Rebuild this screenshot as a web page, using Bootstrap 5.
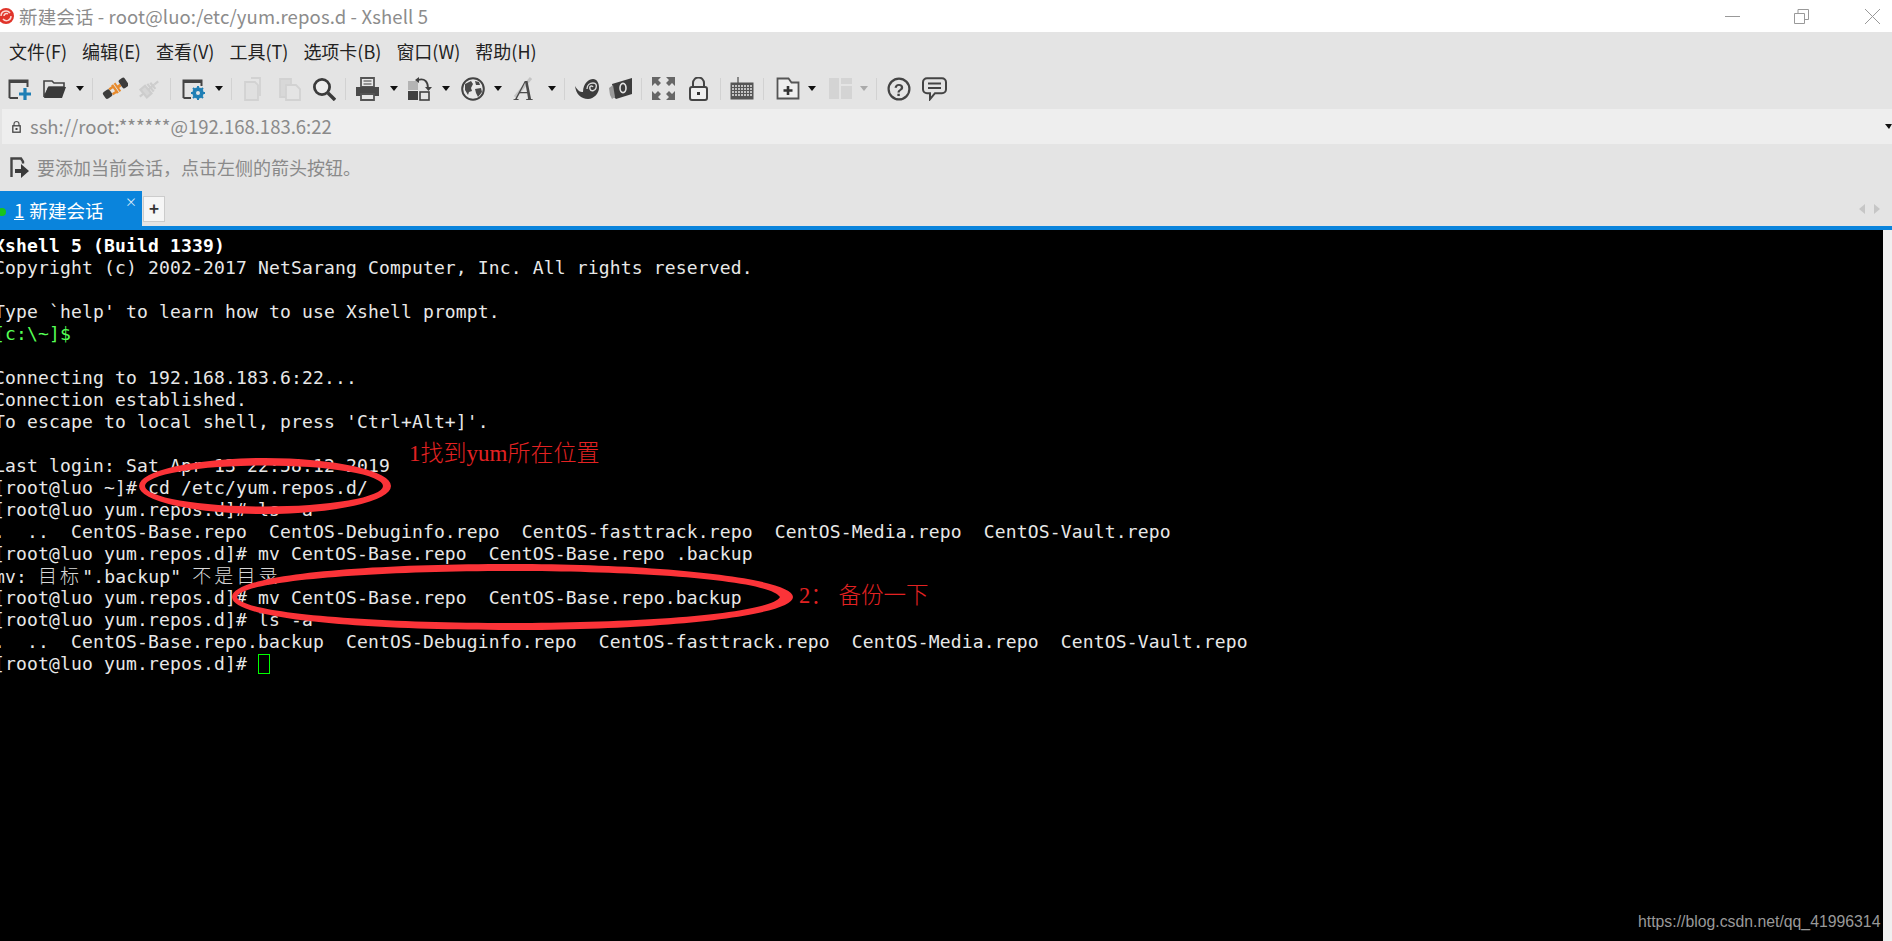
<!DOCTYPE html>
<html lang="zh">
<head>
<meta charset="utf-8">
<title>新建会话 - root@luo:/etc/yum.repos.d - Xshell 5</title>
<link rel="stylesheet" href="https://cdn.jsdelivr.net/npm/bootstrap@5.3.0/dist/css/bootstrap.min.css">
<style>
html,body{height:100%;margin:0;overflow:hidden;background:#000}
.xs-app{height:941px;width:1892px;position:relative;overflow:hidden;font-family:"Noto Sans CJK SC","Noto Sans",sans-serif;background:#e4e4e4}
.xs-title{height:32px;background:#fff;color:#8c8c8c;font-size:18.5px;line-height:32px}
.xs-title .ttl{margin-left:5px;white-space:nowrap;letter-spacing:.13px}
.xs-title .ctl{width:15px;height:15px;display:block}
.ctl-wrap{gap:54px;margin-right:12px}
.ctl-wrap .cl{margin-left:2px}
.xs-menu{height:36px;padding-left:9px;gap:15px;font-size:18px;color:#222;white-space:nowrap;line-height:36px;padding-top:1px}
.xs-tools{height:41px;padding-left:8px}
.xs-tools svg{display:block;filter:blur(.35px);flex:none}
.g8{margin-left:8px}.g9{margin-left:9px}.g10{margin-left:10px}.g11{margin-left:11px}.g12{margin-left:12px}.g13{margin-left:13px}.g14{margin-left:14px}
.tb-caret{width:0;height:0;border-left:4.5px solid transparent;border-right:4.5px solid transparent;border-top:5px solid #111;flex:none}
.tb-caret.off{border-top-color:#aaa}
.tb-sep{width:1px;height:22px;background:#d2d2d2;flex:none}
.xs-addr{height:35px;margin-left:2px;background:#eee;color:#8a8a8a;font-size:18.5px;padding-left:10px;gap:9px;white-space:nowrap}
.xs-addr .dd{margin-left:auto;width:0;height:0;border-left:4px solid transparent;border-right:3px solid transparent;border-top:5px solid #111}
.xs-info{height:47px;padding-left:10px;gap:7px;color:#8a8a8a;font-size:18px;white-space:nowrap}
.xs-tabs{height:35px}
.xs-tab{width:142px;height:35px;background:#0a84dc;color:#fff;font-size:18.6px;padding-left:14px;padding-top:1px;position:relative;white-space:nowrap;line-height:35px}
.xs-tab .dot{position:absolute;left:-2px;top:17px;width:8px;height:8px;border-radius:50%;background:#19c41c}
.xs-tab .x{position:absolute;left:125px;top:-7px;font-size:12px;color:#dcecf8}
.xs-tab u{margin-right:5px}
.xs-add{width:22px;height:26px;margin-top:5px;background:#f6f6f6;border:1px solid #ccc;color:#333;font-size:17px;font-weight:700;line-height:22px;text-align:center;margin-left:1px}
.xs-arrows{margin-left:auto;margin-right:12px;gap:9px}
.ar{width:0;height:0;border-top:5px solid transparent;border-bottom:5px solid transparent}
.ar.l{border-right:6px solid #c6c6c6}.ar.r{border-left:6px solid #c6c6c6}
.xs-strip{height:4px;background:#0a84dc}
.xs-body{height:711px}
.xs-term{background:#000;width:1883px;height:711px;padding-top:5px;color:#e8e8e8;font-family:"DejaVu Sans Mono","Noto Sans CJK SC",monospace;font-size:18px;letter-spacing:.16px;overflow:hidden;position:relative}
.xs-side{width:9px;background:#f0f0f0}
.tl{height:22px;line-height:22px;white-space:pre;margin-left:-6px}
.tl b{color:#fff}
.tl .gr{color:#55ff55}
.tl .wd{font-size:19px;letter-spacing:3.1px;font-weight:300;color:#d8d8d8}
.cur{display:inline-block;width:12px;height:20px;border:1px solid #0f0;vertical-align:-4px}
.ink{position:absolute;left:0;top:0;pointer-events:none}
.note{position:absolute;font-family:"Liberation Serif","Noto Sans CJK SC",serif;color:#e32222;white-space:pre;letter-spacing:0;font-weight:300;line-height:30px}
.n1{left:409px;top:209px;font-size:23px}
.n2{left:799px;top:351px;font-size:22.5px}
.wm{position:absolute;left:1638px;top:682px;font-family:"Liberation Sans",Arial,sans-serif;font-size:15.8px;color:#999;letter-spacing:0;line-height:20px;white-space:nowrap}
</style>
</head>
<body>
<div class="xs-app d-flex flex-column">
  <div class="xs-title d-flex align-items-center">
    <svg width="14" height="18" viewBox="0 0 14 18" class="flex-shrink-0"><circle cx="6" cy="9" r="8" fill="#e0342a"/><path d="M1 9a5 5 0 0 1 9-3M11 9a4.500 4.500 0 0 1-8 3M4 9a2.500 2.500 0 0 1 4-2" fill="none" stroke="#fbd9d4" stroke-width="1.500"/></svg>
    <span class="ttl">新建会话 - root@luo:/etc/yum.repos.d - Xshell 5</span>
    <div class="ms-auto d-flex align-items-center ctl-wrap">
      <svg class="ctl" viewBox="0 0 15 15"><path d="M0 7.500h15" stroke="#999" stroke-width="1"/></svg>
      <svg class="ctl" viewBox="0 0 15 15" fill="none" stroke="#999"><path d="M.5 4.500h10v10H.5z"/><path d="M4 4.500V.5h10.500v10h-4"/></svg>
      <svg class="ctl cl" viewBox="0 0 15 15"><path d="M0 0l15 15M15 0L0 15" stroke="#999" stroke-width="1"/></svg>
    </div>
  </div>

  <div class="xs-menu d-flex align-items-center">
    <span>文件(F)</span><span>编辑(E)</span><span>查看(V)</span><span>工具(T)</span><span>选项卡(B)</span><span>窗口(W)</span><span>帮助(H)</span>
  </div>

  <div class="xs-tools d-flex align-items-center">
    <!-- new -->
    <svg width="24" height="24" viewBox="0 0 24 24"><path d="M1.500 21V3.500h18V10M1.500 21H10" fill="none" stroke="#444" stroke-width="2"/><path d="M1 3h19v3H1z" fill="#444"/><path d="M17 11v12M11 17h12" stroke="#1f7fb5" stroke-width="3.200"/></svg>
    <!-- open -->
    <svg class="g11" width="24" height="24" viewBox="0 0 24 24"><path d="M1 4h8l2 2h10v4H6L1 20z" fill="none" stroke="#444" stroke-width="1.600"/><path d="M5 10h18l-4 11H1z" fill="#3a3a3a"/></svg>
    <div class="tb-caret g9"></div>
    <div class="tb-sep g8"></div>
    <!-- plug orange -->
    <svg class="g9" width="26" height="24" viewBox="0 0 26 24"><g transform="rotate(-35 13 12)"><rect x="0" y="8" width="8" height="8" rx="2" fill="#3c3c3c"/><path d="M8 9h5M8 15h5" stroke="#e78a2c" stroke-width="2.400"/><path d="M13 7v10" stroke="#e78a2c" stroke-width="2.400"/><path d="M16 12h4" stroke="#e78a2c" stroke-width="3"/><rect x="20" y="7" width="7" height="10" rx="2" fill="#3c3c3c"/><path d="M16 7v10" stroke="#e78a2c" stroke-width="2"/></g></svg>
    <!-- plug grey -->
    <svg class="g9" width="24" height="24" viewBox="0 0 24 24"><g transform="rotate(-40 12 12)" fill="none" stroke="#cdcdcd" stroke-width="2.200"><path d="M0 12h5M19 12h5"/><rect x="5" y="7" width="6" height="10" fill="#d6d6d6"/><path d="M14 7v10M17 8v8M11 12h8"/></g></svg>
    <div class="tb-sep g9"></div>
    <!-- props -->
    <svg class="g11" width="24" height="24" viewBox="0 0 24 24"><path d="M1.500 21V3.500h18V9M1.500 21H9" fill="none" stroke="#444" stroke-width="2"/><path d="M1 3h19v3H1z" fill="#444"/><circle cx="16" cy="16" r="4.200" fill="none" stroke="#1f7fb5" stroke-width="3"/><path d="M16 9v14M9 16h14M11 11l10 10M21 11L11 21" stroke="#1f7fb5" stroke-width="2"/><circle cx="16" cy="16" r="2" fill="#e4e4e4"/></svg>
    <div class="tb-caret g9"></div>
    <div class="tb-sep g8"></div>
    <!-- copy -->
    <svg class="g11" width="24" height="24" viewBox="0 0 24 24" fill="none" stroke="#d2d2d2" stroke-width="1.800"><path d="M8 1h9v18"/><path d="M2 5h10l3 3v15H2z" fill="#e0e0e0"/></svg>
    <!-- paste -->
    <svg class="g11" width="24" height="24" viewBox="0 0 24 24" fill="none" stroke="#d2d2d2" stroke-width="1.800"><path d="M2 2h11v18H2z" fill="#d8d8d8"/><path d="M8 8h10l4 4v11H8z" fill="#e4e4e4"/></svg>
    <!-- find -->
    <svg class="g10" width="24" height="24" viewBox="0 0 24 24"><circle cx="10" cy="10" r="7.600" fill="#eee" stroke="#3b3b3b" stroke-width="2.800"/><path d="M16 16l7 7" stroke="#3b3b3b" stroke-width="3.400"/></svg>
    <div class="tb-sep g9"></div>
    <!-- print -->
    <svg class="g9" width="25" height="24" viewBox="0 0 25 24"><path d="M6 1h13v9H6z" fill="#e8e8e8" stroke="#555" stroke-width="1.800"/><path d="M8.500 4h8M8.500 7h8" stroke="#777" stroke-width="1.300"/><path d="M1 10h23v9H1z" fill="#4a4a4a"/><path d="M6 17h13v6H6z" fill="#e8e8e8" stroke="#555" stroke-width="1.800"/></svg>
    <div class="tb-caret g10"></div>
    <!-- transfer -->
    <svg class="g10" width="24" height="24" viewBox="0 0 24 24"><rect x="0" y="4" width="10" height="9" fill="#b4b4b4"/><rect x="0" y="14" width="10" height="9" fill="#404040"/><rect x="12" y="15" width="9" height="8" fill="none" stroke="#404040" stroke-width="1.600"/><path d="M10 3c7-2 10 2 10 8" fill="none" stroke="#404040" stroke-width="1.800"/><path d="M11 0l-4 3 4 3zM17 10h7l-3.500 4z" fill="#404040"/></svg>
    <div class="tb-caret g10"></div>
    <!-- globe -->
    <svg class="g11" width="24" height="24" viewBox="0 0 24 24"><circle cx="12" cy="12" r="10.800" fill="#e8e8e8" stroke="#444" stroke-width="2"/><path d="M4 7l6-3 2 3-2 4 1 3-3 1-1 3-3-5zM14 12l6-1 1 4-4 5-2-4zM14 4l4 1 1 3-4 0z" fill="#4a4a4a"/></svg>
    <div class="tb-caret g9"></div>
    <!-- font -->
    <svg class="g11" width="25" height="24" viewBox="0 0 25 24"><path d="M2 20L18 1" stroke="#c4c4c4" stroke-width="3"/><text x="2" y="23" font-family="Liberation Serif,serif" font-style="italic" font-size="29" fill="#4a4a4a">A</text></svg>
    <div class="tb-caret g10"></div>
    <div class="tb-sep g8"></div>
    <!-- snail -->
    <svg class="g9" width="25" height="24" viewBox="0 0 25 24"><path d="M1 9c3 5 5 6 8 6 0-9 6-13 10-13s6 4 6 9-5 11-11 11C7 22 2 17 1 9z" fill="#3c3c3c"/><path d="M13 12c0-4 3-6 6-6 3 0 4 2 3 5s-5 4-6 1 2-4 3-2" fill="none" stroke="#dcdcdc" stroke-width="1.400"/></svg>
    <!-- session folder -->
    <svg class="g9" width="24" height="24" viewBox="0 0 24 24"><path d="M4 7l20-6v16L8 22l-2-2z" fill="#3c3c3c"/><path d="M1 11l4-3 2 12-3 2-2-4z" fill="#9a9a9a"/><ellipse cx="15" cy="11" rx="3" ry="4.600" fill="none" stroke="#e4e4e4" stroke-width="1.600"/></svg>
    <div class="tb-sep g9"></div>
    <!-- fullscreen -->
    <svg class="g10" width="23" height="23" viewBox="0 0 23 23" fill="#666"><path d="M0 0h9L6 3l3 3-3 3-3-3-3 3zM23 0h-9l3 3-3 3 3 3 3-3 3 3zM0 23h9l-3-3 3-3-3-3-3 3-3-3zM23 23h-9l3-3-3-3 3-3 3 3 3-3z"/></svg>
    <!-- lock -->
    <svg class="g14" width="19" height="24" viewBox="0 0 19 24"><path d="M4 11V6a5.500 5.500 0 0 1 11 0v5" fill="none" stroke="#444" stroke-width="2"/><rect x="1" y="10" width="17" height="13" rx="2" fill="#f0f0f0" stroke="#444" stroke-width="2"/><rect x="8" y="15" width="3" height="3" fill="#333"/></svg>
    <div class="tb-sep g12"></div>
    <!-- keyboard -->
    <svg class="g9" width="24" height="24" viewBox="0 0 24 24"><path d="M8 0v6" stroke="#555" stroke-width="1.300"/><rect x="0.500" y="5.500" width="23" height="17" fill="#555"/><path d="M2 9h20M2 12h20M2 15h20M2 18h20" stroke="#e6e6e6" stroke-width="1.300" stroke-dasharray="2 1"/></svg>
    <div class="tb-sep g9"></div>
    <!-- folder plus -->
    <svg class="g12" width="24" height="24" viewBox="0 0 24 24"><path d="M1.500 1.500h11l3 4h7v16h-21z" fill="#efefef" stroke="#555" stroke-width="1.800"/><path d="M12 9v9M7.500 13.500h9" stroke="#333" stroke-width="2.600"/></svg>
    <div class="tb-caret g8"></div>
    <!-- layout -->
    <svg class="g13" width="23" height="23" viewBox="0 0 23 23"><rect x="0" y="1" width="10" height="21" fill="#d4d4d4"/><rect x="12" y="1" width="11" height="6" fill="#d4d4d4"/><rect x="12" y="9" width="11" height="13" fill="#d4d4d4"/></svg>
    <div class="tb-caret off g8"></div>
    <div class="tb-sep g8"></div>
    <!-- help -->
    <svg class="g10" width="24" height="24" viewBox="0 0 24 24"><circle cx="12" cy="12" r="10.400" fill="none" stroke="#444" stroke-width="2.200"/><text x="12" y="18.500" text-anchor="middle" font-family="Liberation Sans,sans-serif" font-weight="700" font-size="17" fill="#444">?</text></svg>
    <!-- chat -->
    <svg class="g11" width="25" height="24" viewBox="0 0 25 24"><path d="M5 1.200h15a4 4 0 0 1 4 4v7a4 4 0 0 1-4 4h-7l-5 6v-6H5a4 4 0 0 1-4-4v-7a4 4 0 0 1 4-4z" fill="none" stroke="#444" stroke-width="2"/><path d="M6 6.500h13M6 11h13" stroke="#444" stroke-width="2"/></svg>
  </div>

  <div class="xs-addr d-flex align-items-center">
    <svg width="9" height="13" viewBox="0 0 9 13" class="flex-shrink-0"><path d="M2 6V4a2.500 2.500 0 0 1 5 0v2" fill="none" stroke="#555" stroke-width="1.200"/><rect x=".8" y="5.800" width="7.400" height="6.400" fill="none" stroke="#444" stroke-width="1.300"/><rect x="3.500" y="8" width="2" height="2" fill="#444"/></svg>
    <span>ssh://root:******@192.168.183.6:22</span>
    <span class="dd"></span>
  </div>

  <div class="xs-info d-flex align-items-center">
    <svg width="20" height="21" viewBox="0 0 20 21" class="flex-shrink-0"><path d="M1.500 20V1.500H11l2 3v2" fill="none" stroke="#444" stroke-width="2.400"/><path d="M5 12h6V7l8 7-8 7v-5H5z" fill="#3a3a3a"/></svg>
    <span>要添加当前会话，点击左侧的箭头按钮。</span>
  </div>

  <div class="xs-tabs d-flex">
    <div class="xs-tab"><span class="dot"></span><u>1</u>新建会话<span class="x">×</span></div>
    <div class="xs-add">+</div>
    <div class="xs-arrows d-flex align-items-center"><span class="ar l"></span><span class="ar r"></span></div>
  </div>
  <div class="xs-strip"></div>

  <div class="xs-body d-flex">
    <div class="xs-term">
      <div class="tl"><b>Xshell 5 (Build 1339)</b></div>
      <div class="tl">Copyright (c) 2002-2017 NetSarang Computer, Inc. All rights reserved.</div>
      <div class="tl"> </div>
      <div class="tl">Type `help' to learn how to use Xshell prompt.</div>
      <div class="tl"><span class="gr">[c:\~]$ </span></div>
      <div class="tl"> </div>
      <div class="tl">Connecting to 192.168.183.6:22...</div>
      <div class="tl">Connection established.</div>
      <div class="tl">To escape to local shell, press 'Ctrl+Alt+]'.</div>
      <div class="tl"> </div>
      <div class="tl">Last login: Sat Apr 13 22:58:12 2019</div>
      <div class="tl">[root@luo ~]# cd /etc/yum.repos.d/</div>
      <div class="tl">[root@luo yum.repos.d]# ls -a</div>
      <div class="tl">.  ..  CentOS-Base.repo  CentOS-Debuginfo.repo  CentOS-fasttrack.repo  CentOS-Media.repo  CentOS-Vault.repo</div>
      <div class="tl">[root@luo yum.repos.d]# mv CentOS-Base.repo  CentOS-Base.repo .backup</div>
      <div class="tl">mv: <span class="wd">目标</span>".backup" <span class="wd">不是目录</span></div>
      <div class="tl">[root@luo yum.repos.d]# mv CentOS-Base.repo  CentOS-Base.repo.backup</div>
      <div class="tl">[root@luo yum.repos.d]# ls -a</div>
      <div class="tl">.  ..  CentOS-Base.repo.backup  CentOS-Debuginfo.repo  CentOS-fasttrack.repo  CentOS-Media.repo  CentOS-Vault.repo</div>
      <div class="tl">[root@luo yum.repos.d]# <span class="cur"></span></div>

      <svg class="ink" width="1883" height="711" viewBox="0 230 1883 711">
        <path fill="#fb3338" fill-rule="evenodd" d="M139 486a126 28 0 1 0 252 0a126 28 0 1 0-252 0zM145 486a119 20.500 0 1 1 238 0a119 20.500 0 1 1-238 0z"/>
        <path fill="#fb3338" fill-rule="evenodd" d="M232 597C232 575 360 564 512 564C660 564 793 578 793 597C793 616 660 630 512 630C360 630 232 619 232 597zM237 597C240 612 360 623 512 623C640 623 770 614 780 597C770 580 640 571 512 571C360 571 240 582 237 597z"/>
      </svg>
      <div class="note n1">1找到yum所在位置</div>
      <div class="note n2">2： 备份一下</div>
      <div class="wm">https://blog.csdn.net/qq_41996314</div>
    </div>
    <div class="xs-side"></div>
  </div>
</div>
<script src="https://cdn.jsdelivr.net/npm/bootstrap@5.3.0/dist/js/bootstrap.bundle.min.js"></script>
</body>
</html>
